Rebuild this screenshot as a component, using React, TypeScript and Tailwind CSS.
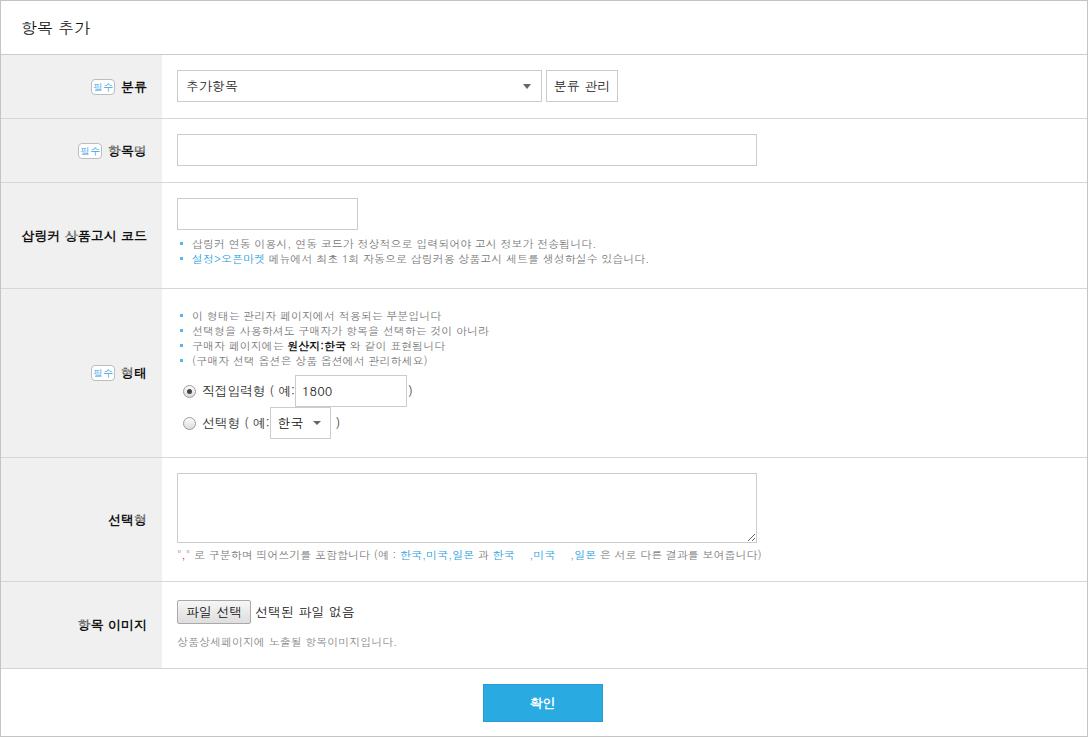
import React from 'react';

const FONT = "font-['Dotum','Noto_Sans_CJK_KR','Noto_Sans',sans-serif]";

const Badge = () => (
  <span className="mr-[6px] inline-flex h-[16px] w-[24px] items-center justify-center rounded-[4px] border border-[#bdbdbd] bg-white text-[10px] font-normal leading-none text-[#3a9fe6]">
    필수
  </span>
);

const Row = ({ label, required, children, pad }: { label: string; required?: boolean; children: React.ReactNode; pad: string }) => (
  <div className="flex border-b border-[#d6d6d6]">
    <div className="flex w-[161px] shrink-0 items-center justify-end bg-[#f0f0f0] pr-[15px] text-[13px] font-bold text-[#111]">
      {required && <Badge />}
      <span>{label}</span>
    </div>
    <div className={`flex-1 pl-[15px] ${pad}`}>{children}</div>
  </div>
);

const Note = ({ children }: { children: React.ReactNode }) => (
  <li className="flex items-center text-[11px] leading-[15px] text-[#777]">
    <span className="mr-[9px] ml-[3px] h-[3px] w-[3px] shrink-0 bg-[#5ab4ea]" />
    <span>{children}</span>
  </li>
);

const Radio = ({ checked }: { checked?: boolean }) => (
  <span className="mr-[6px] ml-[6px] inline-flex h-[13px] w-[13px] items-center justify-center rounded-full border border-[#9a9a9a] bg-gradient-to-b from-[#fdfdfd] to-[#dcdcdc]">
    {checked && <span className="h-[5px] w-[5px] rounded-full bg-[#444]" />}
  </span>
);

export default function App() {
  return (
    <div className={`${FONT} h-[737px] w-[1088px] border border-[#c4c4c4] bg-white text-[#222]`}>
      <div className="flex h-[54px] items-center border-b border-[#cccccc] pl-[20px] text-[16px] text-[#111]">항목 추가</div>

      <Row label="분류" required pad="pt-[15px] pb-[16px]">
        <div className="flex items-center gap-[4px]">
          <div className="flex h-[32px] w-[365px] items-center justify-between border border-[#cccccc] pr-[10px] pl-[8px] text-[13px]">
            <span>추가항목</span>
            <span className="h-0 w-0 border-x-[4px] border-t-[5px] border-x-transparent border-t-[#666]" />
          </div>
          <button className="flex h-[32px] w-[72px] items-center justify-center border border-[#cccccc] bg-white text-[13px]">분류 관리</button>
        </div>
      </Row>

      <Row label="항목명" required pad="pt-[15px] pb-[16px]">
        <input className="block h-[32px] w-[580px] border border-[#cccccc] outline-none" />
      </Row>

      <Row label="삽링커 상품고시 코드" pad="pt-[15px] pb-[22px]">
        <input className="block h-[32px] w-[181px] border border-[#cccccc] outline-none" />
        <ul className="mt-[6px]">
          <Note>삽링커 연동 이용시, 연동 코드가 정상적으로 입력되어야 고시 정보가 전송됩니다.</Note>
          <Note>
            <span className="text-[#1a9be0]">설정&gt;오픈마켓</span> 메뉴에서 최초 1회 자동으로 삽링커용 상품고시 세트를 생성하실수 있습니다.
          </Note>
        </ul>
      </Row>

      <Row label="형태" required pad="pt-[19px] pb-[18px]">
        <ul>
          <Note>이 형태는 관리자 페이지에서 적용되는 부분입니다</Note>
          <Note>선택형을 사용하셔도 구매자가 항목을 선택하는 것이 아니라</Note>
          <Note>
            구매자 페이지에는 <b className="text-[#111]">원산지:한국</b> 와 같이 표현됩니다
          </Note>
          <Note>(구매자 선택 옵션은 상품 옵션에서 관리하세요)</Note>
        </ul>
        <div className="mt-[7px] flex h-[32px] items-center text-[13px] tracking-[-0.3px] text-[#333]">
          <Radio checked />
          <span>직접입력형 ( 예:</span>
          <div className="flex h-[32px] w-[112px] items-center border border-[#cccccc] pl-[6px] tracking-normal text-[#111]">1800</div>
          <span className="ml-[1px]">)</span>
        </div>
        <div className="flex h-[32px] items-center text-[13px] tracking-[-0.3px] text-[#333]">
          <Radio />
          <span>선택형 ( 예:</span>
          <div className="flex h-[32px] w-[61px] items-center border border-[#cccccc] pl-[7px] tracking-normal text-[#111]">
            <span>한국</span>
            <span className="ml-[9px] h-0 w-0 border-x-[4px] border-t-[4px] border-x-transparent border-t-[#666]" />
          </div>
          <span className="ml-[5px]">)</span>
        </div>
      </Row>

      <Row label="선택형" pad="pt-[15px] pb-[19px]">
        <textarea className="block h-[70px] w-[580px] border border-[#cccccc] outline-none" />
        <p className="mt-[4px] text-[11px] leading-[15px] text-[#777]">
          "<span className="text-[#e0003a]">,</span>" 로 구분하며 띄어쓰기를 포함합니다 (예 : <span className="text-[#1a9be0]">한국,미국,일본</span> 과{' '}
          <span className="whitespace-pre text-[#1a9be0]">한국    ,미국    ,일본</span> 은 서로 다른 결과를 보여줍니다)
        </p>
      </Row>

      <Row label="항목 이미지" pad="pt-[18px] pb-[19px]">
        <div className="flex items-center text-[13px] text-[#222]">
          <button className="h-[24px] w-[74px] rounded-[2px] border border-[#a9a9a9] bg-gradient-to-b from-[#f6f6f6] to-[#dedede] text-[13px] text-[#111]">파일 선택</button>
          <span className="ml-[4px]">선택된 파일 없음</span>
        </div>
        <p className="mt-[10px] text-[11px] leading-[15px] text-[#888]">상품상세페이지에 노출될 항목이미지입니다.</p>
      </Row>

      <div className="flex justify-center pt-[15px]">
        <button className="ml-[-3px] h-[38px] w-[120px] border border-[#2a9ad8] bg-[#29abe2] text-[13px] font-bold text-white">확인</button>
      </div>
    </div>
  );
}
